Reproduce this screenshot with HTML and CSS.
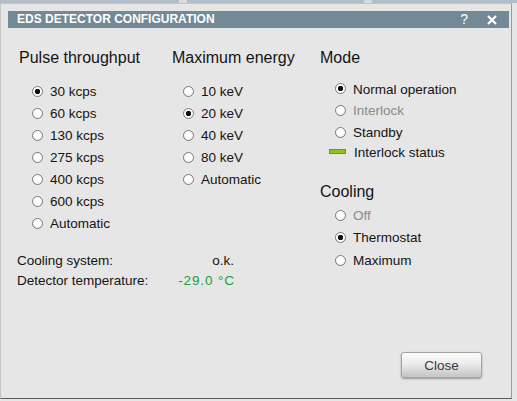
FILE: index.html
```html
<!DOCTYPE html>
<html>
<head>
<meta charset="utf-8">
<link rel="stylesheet" href="styles.css">
</head>
<body>
<div class="top-strip"></div>
<div class="desk">
  <div class="window">
    <div class="titlebar">
      <span class="title">EDS DETECTOR CONFIGURATION</span>
      <span class="help">?</span>
      <svg class="close-x" width="10" height="10" viewBox="0 0 10 10"><path d="M1 1 L9 9 M9 1 L1 9" stroke="#fff" stroke-width="2.2" fill="none"/></svg>
    </div>
    <div class="main">
      <div class="left">
        <div class="cols">
          <div class="col col-pulse">
            <h2 class="heading">Pulse throughput</h2>
            <ul class="radios">
              <li class="row"><span class="radio checked"></span>30 kcps</li>
              <li class="row"><span class="radio"></span>60 kcps</li>
              <li class="row"><span class="radio"></span>130 kcps</li>
              <li class="row"><span class="radio"></span>275 kcps</li>
              <li class="row"><span class="radio"></span>400 kcps</li>
              <li class="row"><span class="radio"></span>600 kcps</li>
              <li class="row"><span class="radio"></span>Automatic</li>
            </ul>
          </div>
          <div class="col col-energy">
            <h2 class="heading">Maximum energy</h2>
            <ul class="radios">
              <li class="row"><span class="radio"></span>10 keV</li>
              <li class="row"><span class="radio checked"></span>20 keV</li>
              <li class="row"><span class="radio"></span>40 keV</li>
              <li class="row"><span class="radio"></span>80 keV</li>
              <li class="row"><span class="radio"></span>Automatic</li>
            </ul>
          </div>
        </div>
        <div class="info">
          <span class="info-label">Cooling system:</span><span class="info-value">o.k.</span>
          <span class="info-label">Detector temperature:</span><span class="info-value temp">-29.0 °C</span>
        </div>
      </div>
      <div class="col col-mode">
        <h2 class="heading">Mode</h2>
        <ul class="radios mode-list">
          <li class="row"><span class="radio checked"></span>Normal operation</li>
          <li class="row disabled"><span class="radio"></span>Interlock</li>
          <li class="row"><span class="radio"></span>Standby</li>
        </ul>
        <div class="status"><span class="status-bar"></span>Interlock status</div>
        <h2 class="heading cooling-heading">Cooling</h2>
        <ul class="radios cooling-list">
          <li class="row disabled"><span class="radio"></span>Off</li>
          <li class="row"><span class="radio checked"></span>Thermostat</li>
          <li class="row"><span class="radio"></span>Maximum</li>
        </ul>
      </div>
    </div>
    <div class="footer">
      <button class="btn">Close</button>
    </div>
  </div>
</div>
</body>
</html>
```

FILE: styles.css
```css
html, body {
  margin: 0;
  padding: 0;
}
body {
  width: 517px;
  height: 401px;
  overflow: hidden;
  background: #e6e6e6;
  font-family: "Liberation Sans", Arial, sans-serif;
  color: #141414;
}
.top-strip {
  height: 3px;
  background: linear-gradient(to right, #b4bec8 0 179px, #d9dcdf 179px 187px, #b4bec8 187px 364px, #d9dcdf 364px 372px, #b4bec8 372px);
}
.desk {
  display: flex;
}
.window {
  width: 512px;
  height: 396px;
  box-sizing: border-box;
  border: 1px solid #c4c4c4;
  border-right-color: #9a9a9a;
  border-bottom-color: #5a5a5a;
  background: #e6e6e6;
  display: flex;
  flex-direction: column;
}
.titlebar {
  margin: 7px 2px 0 7px;
  height: 17px;
  background: #738a96;
  display: flex;
  align-items: center;
  padding-left: 9px;
  color: #fff;
}
.title {
  font-weight: bold;
  font-size: 12px;
  line-height: 17px;
}
.help {
  margin-left: auto;
  font-size: 14px;
  line-height: 17px;
  margin-right: 19px;
}
.close-x {
  margin-right: 12px;
}
.main {
  display: flex;
  padding: 19.5px 0 0 16px;
}
.cols {
  display: flex;
}
.col-pulse {
  width: 153px;
  padding-left: 2px;
}
.col-energy {
  width: 148px;
}
.heading {
  margin: 0 0 13px 0;
  font-size: 16px;
  font-weight: normal;
  line-height: 20px;
}
.radios {
  list-style: none;
  margin: 0;
  padding: 0;
}
.col-pulse .radios {
  padding-left: 13px;
}
.col-energy .radios {
  padding-left: 11px;
}
.row {
  display: flex;
  align-items: center;
  height: 22px;
  font-size: 13.5px;
  line-height: 22px;
  white-space: nowrap;
}
.radio {
  width: 11px;
  height: 11px;
  box-sizing: border-box;
  border: 1px solid #7d7a74;
  border-radius: 50%;
  background: radial-gradient(circle at 50% 40%, #ffffff 0 40%, #ececec 100%);
  margin-right: 7px;
  flex: none;
  position: relative;
  top: -0.5px;
}
.radio.checked {
  background: radial-gradient(circle, #111 0 2.4px, #fff 3px);
}
.disabled {
  color: #8a8a8a;
}
.info {
  margin-top: 16px;
  width: 217px;
  display: grid;
  grid-template-columns: 1fr auto;
  font-size: 13.5px;
  line-height: 20px;
}
.info-value {
  text-align: right;
}
.temp {
  color: #22a030;
  letter-spacing: 0.9px;
  margin-right: -1px;
}
.col-mode .heading {
  margin-bottom: 11px;
}
.col-mode .radios {
  padding-left: 15px;
}
.mode-list .row {
  height: 21.7px;
  line-height: 21.7px;
}
.status {
  display: flex;
  align-items: center;
  height: 17px;
  font-size: 13.5px;
  line-height: 17px;
  padding-left: 9px;
}
.status-bar {
  width: 17px;
  height: 5px;
  box-sizing: border-box;
  background: #8ec41c;
  border: 1px solid #6d9a12;
  margin-right: 8px;
  position: relative;
  top: -1px;
}
.col-mode .cooling-heading {
  margin-top: 21px;
  margin-bottom: 3px;
}
.cooling-list .row {
  height: 22.5px;
  line-height: 22.5px;
}
.footer {
  margin-top: auto;
  display: flex;
  justify-content: flex-end;
  padding: 0 29px 20px 0;
}
.btn {
  width: 81px;
  height: 26px;
  box-sizing: border-box;
  border: 1px solid #a4a4a4;
  border-radius: 3px;
  background: linear-gradient(#fbfbfb, #ececec 45%, #d6d6d6 75%, #c4c4c4);
  box-shadow: 0 1px 2px rgba(0, 0, 0, 0.35);
  font-family: "Liberation Sans", Arial, sans-serif;
  font-size: 13.5px;
  color: #353a42;
  padding: 0;
}
```
